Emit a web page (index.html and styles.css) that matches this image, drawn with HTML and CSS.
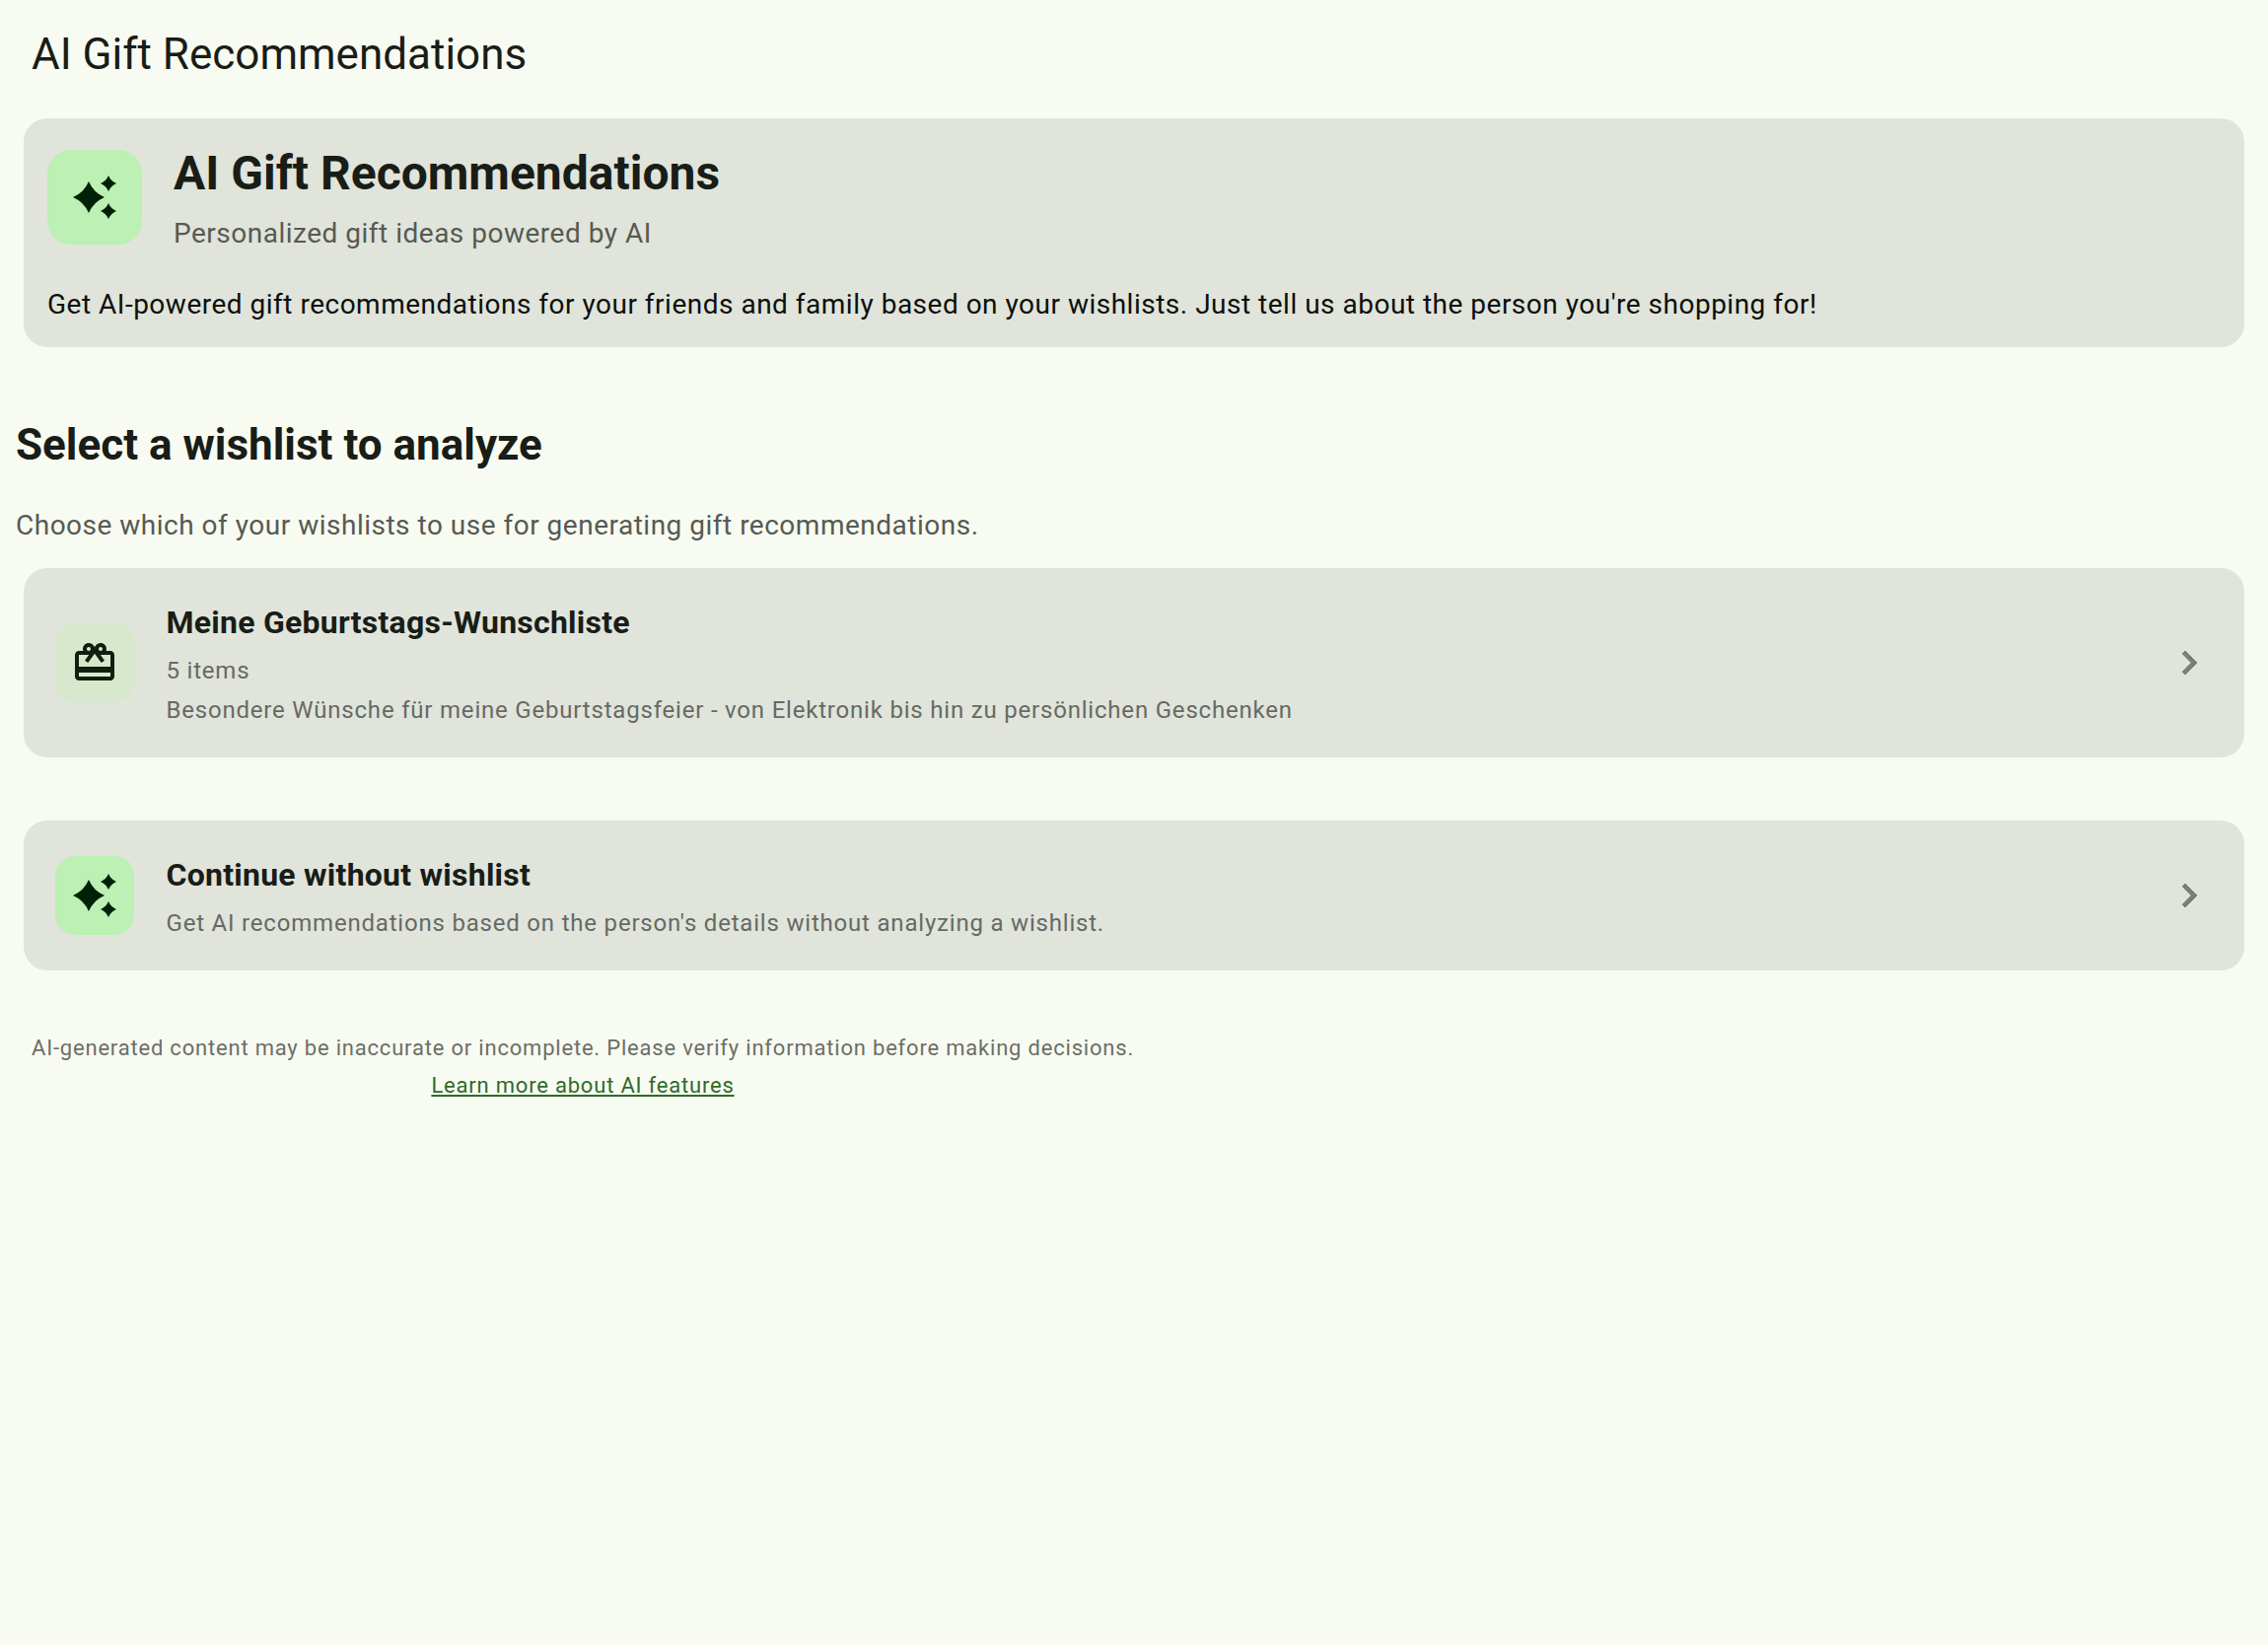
FILE: index.html
```html
<!DOCTYPE html>
<html lang="en">
<head>
  <meta charset="UTF-8">
  <title>AI Gift Recommendations</title>
  <link rel="stylesheet" href="styles.css">
</head>
<body>
  <header class="top-bar">AI Gift Recommendations</header>

  <section class="card hero">
    <div class="hero-head">
      <div class="chip chip-hero">
        <svg class="icon" viewBox="0 0 24 24"><path d="M9 4Q11.4 9.6 17 12 11.4 14.4 9 20 6.6 14.4 1 12 6.6 9.6 9 4zM19 1Q20.2 3.8 23 5 20.2 6.2 19 9 17.8 6.2 15 5 17.8 3.8 19 1zM19 15Q20.2 17.8 23 19 20.2 20.2 19 23 17.8 20.2 15 19 17.8 17.8 19 15z"/></svg>
      </div>
      <div class="hero-titles">
        <h1>AI Gift Recommendations</h1>
        <p class="hero-sub">Personalized gift ideas powered by AI</p>
      </div>
    </div>
    <p class="hero-text">Get AI-powered gift recommendations for your friends and family based on your wishlists. Just tell us about the person you're shopping for!</p>
  </section>

  <section class="select">
    <h2>Select a wishlist to analyze</h2>
    <p class="select-sub">Choose which of your wishlists to use for generating gift recommendations.</p>
  </section>

  <a class="card row row-wishlist">
    <div class="chip chip-gift">
      <svg class="icon" viewBox="0 0 24 24"><path d="M20 6h-2.18c.11-.31.18-.65.18-1 0-1.66-1.34-3-3-3-1.05 0-1.96.54-2.5 1.35l-.5.67-.5-.68C10.96 2.54 10.05 2 9 2 7.34 2 6 3.34 6 5c0 .35.07.69.18 1H4c-1.11 0-1.99.89-1.99 2L2 19c0 1.11.89 2 2 2h16c1.11 0 2-.89 2-2V8c0-1.11-.89-2-2-2zm-5-2c.55 0 1 .45 1 1s-.45 1-1 1-1-.45-1-1 .45-1 1-1zM9 4c.55 0 1 .45 1 1s-.45 1-1 1-1-.45-1-1 .45-1 1-1zm11 15H4v-2h16v2zm0-5H4V8h5.08L7 10.83 8.62 12 11 8.76l1-1.36 1 1.36L15.38 12 17 10.83 14.92 8H20v6z"/></svg>
    </div>
    <div class="row-body">
      <h3>Meine Geburtstags-Wunschliste</h3>
      <p class="row-count">5 items</p>
      <p class="row-text">Besondere Wünsche für meine Geburtstagsfeier - von Elektronik bis hin zu persönlichen Geschenken</p>
    </div>
    <svg class="chevron" viewBox="0 0 24 24"><path d="M10 6L8.59 7.41 13.17 12l-4.58 4.59L10 18l6-6z"/></svg>
  </a>

  <a class="card row row-plain">
    <div class="chip chip-spark">
      <svg class="icon" viewBox="0 0 24 24"><path d="M9 4Q11.4 9.6 17 12 11.4 14.4 9 20 6.6 14.4 1 12 6.6 9.6 9 4zM19 1Q20.2 3.8 23 5 20.2 6.2 19 9 17.8 6.2 15 5 17.8 3.8 19 1zM19 15Q20.2 17.8 23 19 20.2 20.2 19 23 17.8 20.2 15 19 17.8 17.8 19 15z"/></svg>
    </div>
    <div class="row-body">
      <h3>Continue without wishlist</h3>
      <p class="row-text row-text-solo">Get AI recommendations based on the person's details without analyzing a wishlist.</p>
    </div>
    <svg class="chevron" viewBox="0 0 24 24"><path d="M10 6L8.59 7.41 13.17 12l-4.58 4.59L10 18l6-6z"/></svg>
  </a>

  <footer class="disclaimer">
    <p>AI-generated content may be inaccurate or incomplete. Please verify information before making decisions.</p>
    <a class="disclaimer-link">Learn more about AI features</a>
  </footer>
</body>
</html>
```

FILE: styles.css
```css
html, body {
  height: 100%;
}
body {
  margin: 0;
  background: #f8fbf1;
  color: #191d17;
  font-family: Roboto, "Liberation Sans", sans-serif;
}
h1, h2, h3, p {
  margin: 0;
}
.top-bar {
  padding: 25px 32px 0;
  height: 96px;
  box-sizing: border-box;
  font-size: 44px;
  line-height: 60px;
}
.card {
  display: block;
  margin: 0 24px;
  background: #e0e4db;
  border-radius: 24px;
}
.hero {
  margin-top: 24px;
  padding: 32px 24px 0;
  height: 232px;
  box-sizing: border-box;
}
.hero-head {
  display: flex;
  gap: 32px;
}
.chip {
  display: flex;
  align-items: center;
  justify-content: center;
  flex: none;
  width: 80px;
  height: 80px;
  border-radius: 20px;
}
.chip-hero {
  width: 96px;
  height: 96px;
  border-radius: 24px;
  background: #bdf0b4;
}
.chip-gift {
  background: #d7e8cd;
}
.chip-spark {
  background: #bdf0b4;
}
.icon {
  width: 48px;
  height: 48px;
  fill: #002106;
}
.chip-gift .icon {
  fill: #111f0f;
}
h1 {
  font-size: 48px;
  line-height: 48px;
  font-weight: 700;
}
.hero-sub {
  margin-top: 19px;
  font-size: 28px;
  line-height: 36px;
  letter-spacing: 0.5px;
  color: #565a53;
}
.hero-text {
  margin-top: 34px;
  font-size: 28px;
  line-height: 40px;
  letter-spacing: 0.5px;
  color: #0d0f0c;
}
.select {
  padding: 71px 16px 0;
}
h2 {
  font-size: 44px;
  line-height: 56px;
  font-weight: 700;
}
.select-sub {
  margin-top: 36px;
  font-size: 28px;
  line-height: 36px;
  letter-spacing: 0.5px;
  color: #565a53;
}
.row {
  display: flex;
  align-items: center;
  padding: 0 32px;
}
.row-wishlist {
  margin-top: 25px;
  height: 192px;
}
.row-plain {
  margin-top: 64px;
  height: 152px;
}
.row-body {
  flex: 1;
  margin-left: 32.5px;
}
h3 {
  font-size: 32px;
  line-height: 44px;
  font-weight: 700;
  letter-spacing: 0.25px;
}
.row-count, .row-text {
  font-size: 24px;
  line-height: 32px;
  letter-spacing: 0.8px;
  color: #666a63;
}
.row-count {
  margin-top: 11px;
}
.row-text {
  margin-top: 8px;
}
.row-text-solo {
  margin-top: 11px;
}
.chevron {
  flex: none;
  width: 48px;
  height: 48px;
  fill: #7a7e77;
  stroke: #7a7e77;
  stroke-width: 0.5;
}
.disclaimer {
  display: table;
  margin: 60px 0 0 32px;
  font-size: 22px;
  line-height: 38px;
  letter-spacing: 0.8px;
  text-align: center;
  color: #6b6f68;
}
.disclaimer-link {
  color: #2f6a2c;
  text-decoration: underline;
}
```
